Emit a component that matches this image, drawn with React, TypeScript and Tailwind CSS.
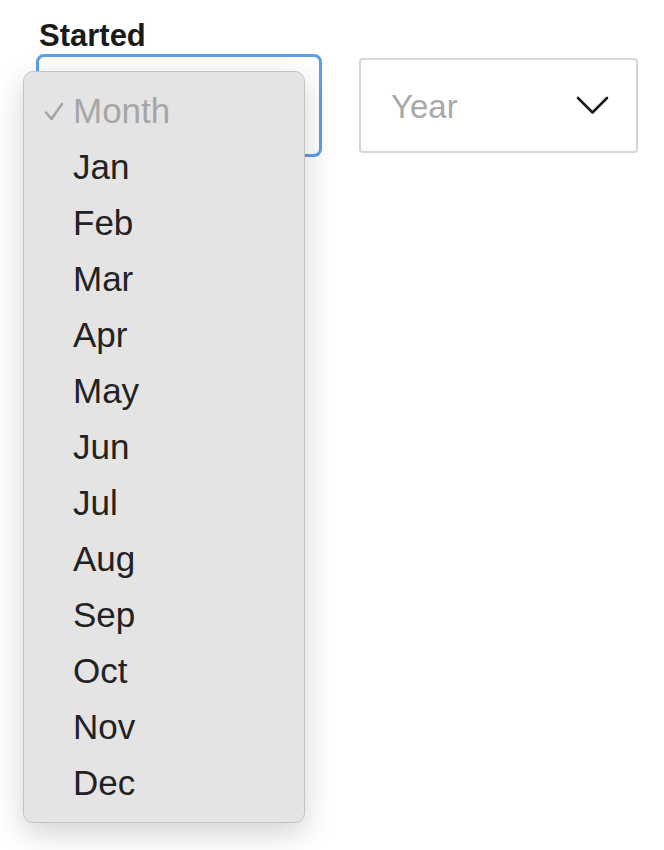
const months = [
  "Jan",
  "Feb",
  "Mar",
  "Apr",
  "May",
  "Jun",
  "Jul",
  "Aug",
  "Sep",
  "Oct",
  "Nov",
  "Dec",
];

const Check = () => (
  <svg width="20" height="19" viewBox="0 0 20 19" fill="none">
    <path
      d="M2 10.5 L7.5 17 L18 2"
      stroke="#a3a3a3"
      strokeWidth="2.4"
      strokeLinecap="round"
      strokeLinejoin="round"
    />
  </svg>
);

const Chevron = () => (
  <svg width="33" height="19" viewBox="0 0 33 19" fill="none">
    <path
      d="M2 2 L16.5 16.5 L31 2"
      stroke="#1c1c1c"
      strokeWidth="2.6"
      strokeLinecap="round"
      strokeLinejoin="round"
    />
  </svg>
);

const MonthMenu = () => {
  return (
    <div className="absolute left-[-16px] top-[14px] z-10 w-[282px] py-[11px] rounded-[10px] border border-[#c4c4c4] bg-[#e4e4e4] shadow-[0_10px_30px_rgba(0,0,0,0.18)]">
      <div className="flex items-center h-[56px] pl-[20px]">
        <span className="w-[29px]">
          <Check />
        </span>
        <span className="text-[#a6a6a6]">Month</span>
      </div>
      {months.map((m) => (
        <div key={m} className="flex items-center h-[56px] pl-[49px] text-[#222]">
          {m}
        </div>
      ))}
    </div>
  );
};

export default function App() {
  return (
    <div
      className="min-h-screen bg-white pl-[36px] pt-[20px]"
      style={{ fontFamily: '"Liberation Sans", Arial, sans-serif' }}
    >
      <div className="ml-[3px] mb-[3px] text-[31px] leading-[31px] font-bold text-[#1a1a1a]">
        Started
      </div>
      <div className="flex items-center gap-[37px]">
        <div className="relative w-[286px] h-[103px] rounded-[8px] border-[3px] border-[#5b9fea] bg-white">
          <div className="text-[35px] leading-[56px]">
            <MonthMenu />
          </div>
        </div>
        <div className="flex items-center justify-between w-[279px] h-[95px] rounded-[4px] border-2 border-[#d6d6d6] bg-white pl-[30px] pr-[27px]">
          <span className="text-[33px] text-[#a9a9a9] pt-[2px]">Year</span>
          <Chevron />
        </div>
      </div>
    </div>
  );
}
